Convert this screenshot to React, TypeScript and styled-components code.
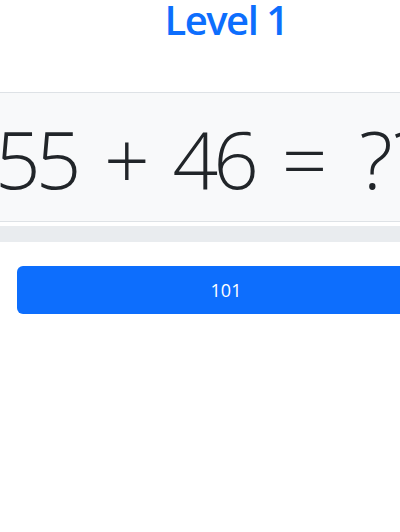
import React from "react";
import styled, { createGlobalStyle } from "styled-components";

const Global = createGlobalStyle`
  html, body { margin: 0; padding: 0; overflow: hidden; background: #fff; }
  body { font-family: "Open Sans", "Noto Sans", sans-serif; color: #212529; }
`;

const Page = styled.div`
  width: 452px;
  display: flex;
  flex-direction: column;
  align-items: stretch;
`;

const Title = styled.h1`
  margin: 0;
  height: 48px;
  line-height: 40px;
  font-size: 40px;
  font-weight: 600;
  letter-spacing: -1.5px;
  color: #0d6efd;
  text-align: center;
`;

const Card = styled.div`
  margin: 44px -24px 0;
  height: 128px;
  border-top: 1px solid #dee2e6;
  border-bottom: 1px solid #dee2e6;
  background: #f8f9fa;
  display: flex;
  align-items: center;
  justify-content: flex-start;
  padding-left: 19px;
  overflow: hidden;
`;

const Equation = styled.div`
  font-size: 80px;
  font-weight: 300;
  letter-spacing: -5px;
  word-spacing: 12px;
  white-space: nowrap;
  color: #212529;
  line-height: 1;
  padding-top: 2px;
`;

const Unknown = styled.span`
  margin-left: 9px;
  letter-spacing: 0;
`;

const Bar = styled.div`
  margin: 4px -24px 0;
  height: 16px;
  background: #e9ecef;
`;

const Answer = styled.button`
  margin: 24px 17px 0;
  height: 48px;
  border: none;
  border-radius: 6px;
  background: #0d6efd;
  color: #fff;
  font-family: inherit;
  font-size: 18px;
  font-weight: 400;
`;

export default function App() {
  return (
    <>
      <Global />
      <Page>
        <Title>Level 1</Title>
        <Card>
          <Equation>
            55 + 46 = <Unknown>??</Unknown>
          </Equation>
        </Card>
        <Bar />
        <Answer>101</Answer>
      </Page>
    </>
  );
}
